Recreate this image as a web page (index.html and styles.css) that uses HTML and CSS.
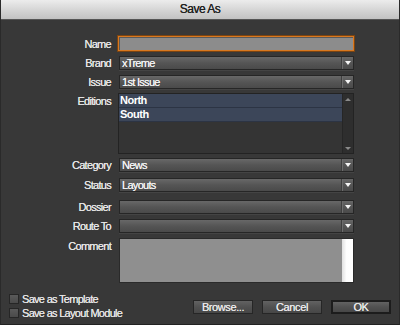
FILE: index.html
```html
<!DOCTYPE html>
<html lang="en">
<head>
  <meta charset="UTF-8" />
  <title>Save As</title>
  <link rel="stylesheet" href="styles.css">
</head>
<body>
  <div class="window">
    <div class="titlebar">Save As</div>

    <div class="content">
      <div class="row row-name">
        <label>Name</label>
        <div class="textfield"></div>
      </div>

      <div class="row gap5">
        <label>Brand</label>
        <div class="select"><span>xTreme</span><i class="arrow"></i></div>
      </div>

      <div class="row gap5">
        <label>Issue</label>
        <div class="select"><span>1st Issue</span><i class="arrow"></i></div>
      </div>

      <div class="row row-top gap4">
        <label>Editions</label>
        <div class="listbox">
          <div class="items">
            <div class="item">North</div>
            <div class="item">South</div>
          </div>
          <div class="scrollbar">
            <i class="up"></i>
            <i class="down"></i>
          </div>
        </div>
      </div>

      <div class="row gap4">
        <label>Category</label>
        <div class="select"><span>News</span><i class="arrow"></i></div>
      </div>

      <div class="row gap6">
        <label>Status</label>
        <div class="select"><span>Layouts</span><i class="arrow"></i></div>
      </div>

      <div class="row gap8">
        <label>Dossier</label>
        <div class="select"><span></span><i class="arrow"></i></div>
      </div>

      <div class="row gap5">
        <label>Route To</label>
        <div class="select"><span></span><i class="arrow"></i></div>
      </div>

      <div class="row row-top gap5">
        <label>Comment</label>
        <div class="comment"><div class="comment-bar"></div></div>
      </div>

      <div class="footer">
        <div class="checks">
          <div class="check"><i class="box"></i>Save as Template</div>
          <div class="check"><i class="box"></i>Save as Layout Module</div>
        </div>
        <div class="buttons">
          <button class="btn">Browse...</button>
          <button class="btn">Cancel</button>
          <button class="btn btn-default">OK</button>
        </div>
      </div>
    </div>
  </div>
</body>
</html>
```

FILE: styles.css
```css
html, body {
  margin: 0;
  padding: 0;
  background: #3a3a3a;
  font-family: 'Liberation Sans', Arial, sans-serif;
  font-size: 11px;
  letter-spacing: -0.7px;
  color: #e4e4e4;
}

.window {
  width: 400px;
  height: 325px;
  box-sizing: border-box;
  background: #383838;
  border-left: 1px solid #2a2a2a;
  border-right: 1px solid #2a2a2a;
  border-bottom: 1px solid #222;
  overflow: hidden;
}

.titlebar {
  height: 19px;
  line-height: 19px;
  text-align: center;
  font-size: 12px;
  letter-spacing: -0.5px;
  color: #222;
  text-shadow: 0 0 0.4px #222;
  background: linear-gradient(#ececec, #d2d2d2 60%, #c2c2c2);
  border-bottom: 1px solid #555;
}

.content {
  padding-top: 16px;
}

.row {
  display: grid;
  grid-template-columns: 110px 236px;
  column-gap: 7px;
  align-items: center;
}

.row label {
  text-align: right;
  color: #e6e6e6;
  text-shadow: 0 0 0.4px #e6e6e6;
}

.row-top {
  align-items: start;
}

.row-top label {
  padding-top: 2px;
}

.gap4 { margin-top: 4px; }
.gap5 { margin-top: 5px; }
.gap6 { margin-top: 6px; }
.gap8 { margin-top: 8px; }

.textfield {
  height: 15px;
  box-sizing: border-box;
  background: #8c8c8c;
  border: 1px solid #d9781f;
  box-shadow: 0 0 0 1px #7a4412, inset 1px 1px 0 #5a5a5a;
}

.select {
  height: 14px;
  box-sizing: border-box;
  margin-left: 1px;
  display: flex;
  align-items: center;
  background: linear-gradient(#686868, #555 50%, #4a4a4a);
  border: 1px solid #262626;
  box-shadow: 0 1px 0 #444;
  color: #f2f2f2;
  text-shadow: 0 0 0.4px #f2f2f2;
}

.select span {
  flex: 1;
  padding-left: 2px;
  line-height: 12px;
}

.arrow {
  width: 11px;
  height: 12px;
  border-left: 1px solid #3e3e3e;
  box-shadow: inset 1px 0 0 #6c6c6c;
  position: relative;
}

.arrow::after {
  content: '';
  position: absolute;
  left: 3px;
  top: 4px;
  border-left: 3px solid transparent;
  border-right: 3px solid transparent;
  border-top: 4px solid #f4f4f4;
}

.listbox {
  height: 61px;
  box-sizing: border-box;
  display: flex;
  border: 1px solid #232323;
  background: #343434;
}

.items {
  flex: 1;
}

.item {
  height: 13px;
  line-height: 13px;
  padding-left: 1px;
  font-weight: bold;
  letter-spacing: -0.5px;
  color: #fff;
  background: #3c4659;
  border-bottom: 1px solid #2c3444;
}

.scrollbar {
  width: 10px;
  background: #2e2e2e;
  border-left: 1px solid #262626;
  display: flex;
  flex-direction: column;
  justify-content: space-between;
  align-items: center;
  padding: 4px 0 3px;
}

.scrollbar .up {
  border-left: 3px solid transparent;
  border-right: 3px solid transparent;
  border-bottom: 3px solid #8a8a8a;
}

.scrollbar .down {
  border-left: 3px solid transparent;
  border-right: 3px solid transparent;
  border-top: 3px solid #8a8a8a;
}

.comment {
  height: 45px;
  box-sizing: border-box;
  margin-left: 1px;
  display: flex;
  justify-content: flex-end;
  background: #8f8f8f;
  border: 1px solid #2a2a2a;
}

.comment-bar {
  width: 11px;
  background: linear-gradient(90deg, #e0e0e0, #fdfdfd 40%, #fff);
}

.footer {
  display: flex;
  justify-content: space-between;
  margin-top: 10px;
}

.checks {
  padding-left: 8px;
  display: flex;
  flex-direction: column;
  gap: 3px;
}

.check {
  display: flex;
  align-items: center;
  gap: 3px;
  height: 11px;
  color: #e4e4e4;
  text-shadow: 0 0 0.4px #e4e4e4;
}

.box {
  width: 10px;
  height: 10px;
  background: linear-gradient(#5a5a5a, #4a4a4a);
  border: 1px solid #262626;
  box-sizing: border-box;
}

.buttons {
  display: flex;
  gap: 9px;
  padding-top: 7px;
  padding-right: 8px;
}

.btn {
  width: 60px;
  height: 14px;
  padding: 0;
  font-family: inherit;
  font-size: 11px;
  letter-spacing: -0.4px;
  line-height: 12px;
  color: #e8e8e8;
  text-shadow: 0 0 0.4px #e8e8e8;
  background: linear-gradient(#626262, #515151 50%, #474747);
  border: 1px solid #262626;
}

.btn-default {
  border: 2px solid #1c1c1c;
  line-height: 10px;
}
```
